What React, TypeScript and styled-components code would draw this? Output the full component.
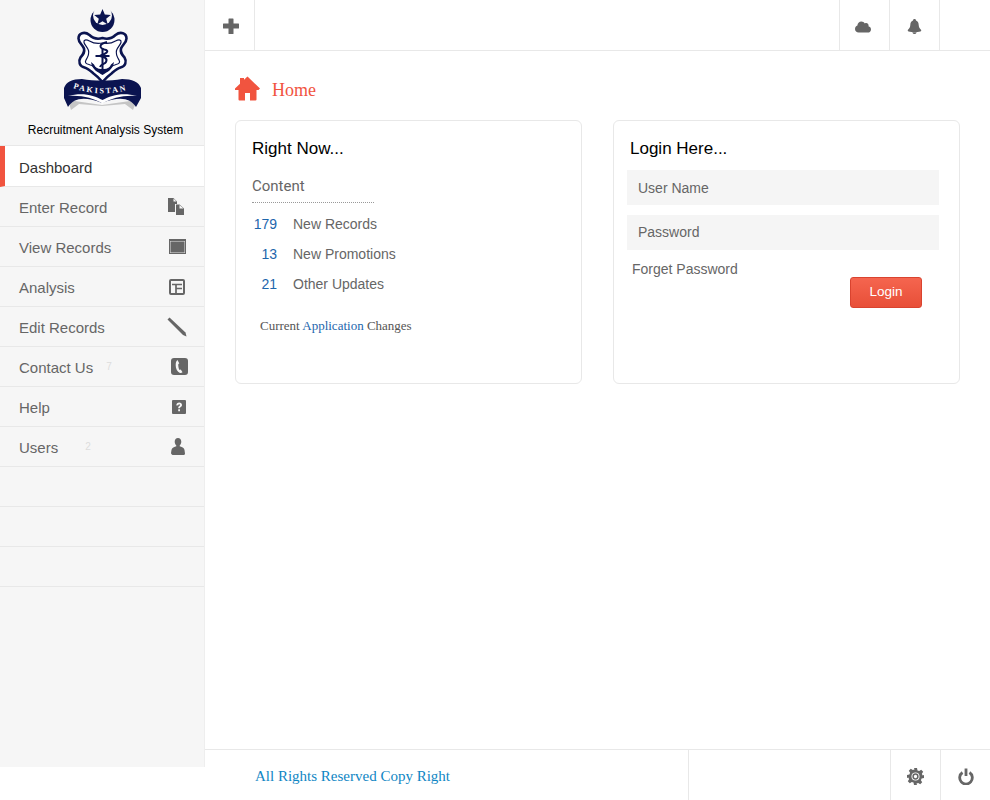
import React from 'react';
import styled, { createGlobalStyle } from 'styled-components';
import { FaCloud } from 'react-icons/fa';

const GlobalStyle = createGlobalStyle`
  html, body {
    margin: 0;
    padding: 0;
    background: #fff;
    font-family: "Liberation Sans", Arial, sans-serif;
  }
  * {
    box-sizing: border-box;
  }
`;

const Shell = styled.div`
  display: flex;
  align-items: flex-start;
  width: 990px;
  height: 800px;
  overflow: hidden;
`;

const Sidebar = styled.aside`
  flex: 0 0 205px;
  height: 767px;
  background: #f6f6f6;
  border-right: 1px solid #eeeeee;
`;

const Brand = styled.div`
  height: 146px;
  display: flex;
  flex-direction: column;
  align-items: center;
  border-bottom: 1px solid #e8e8e8;
  padding-top: 6px;
`;

const BrandTitle = styled.div`
  margin-top: 11px;
  padding-left: 7px;
  font-size: 12px;
  line-height: 14px;
  color: #000;
`;

const MenuRow = styled.div<{ $active?: boolean }>`
  height: ${p => (p.$active ? '41px' : '40px')};
  display: flex;
  align-items: center;
  padding: 2px 0 0 ${p => (p.$active ? '14px' : '19px')};
  border-bottom: 1px solid #e8e8e8;
  border-left: ${p => (p.$active ? '5px solid #f1543f' : 'none')};
  background: ${p => (p.$active ? '#fff' : 'transparent')};
  color: ${p => (p.$active ? '#333' : '#666')};
  font-size: 15px;
`;

const MenuLabel = styled.span`
  flex: 0 0 auto;
`;

const MenuBadge = styled.span<{ $gap: number }>`
  margin-left: ${p => p.$gap}px;
  align-self: flex-start;
  margin-top: 12px;
  font-size: 10px;
  line-height: 11px;
  color: #dddddd;
`;

const MenuIcon = styled.span<{ $right: number }>`
  margin-left: auto;
  width: 20px;
  height: 20px;
  margin-right: ${p => p.$right}px;
  margin-top: -2px;
  display: flex;
  align-items: center;
  justify-content: center;
  color: #666;
`;

const Main = styled.div`
  flex: 1;
  height: 800px;
  display: flex;
  flex-direction: column;
`;

const TopBar = styled.header`
  flex: 0 0 51px;
  display: flex;
  border-bottom: 1px solid #e8e8e8;
`;

const AddCell = styled.div`
  width: 50px;
  height: 50px;
  display: flex;
  align-items: center;
  justify-content: center;
  border-right: 1px solid #e8e8e8;
  padding: 1px 0 0 2px;
`;

const BarSpacer = styled.div`
  flex: 1;
`;

const BarCell = styled.div<{ $width?: number }>`
  width: ${p => p.$width ?? 50}px;
  display: flex;
  align-items: center;
  justify-content: center;
  border-left: 1px solid #e8e8e8;
  color: #666;
  padding-top: 3px;
`;

const CloudGlyph = styled(FaCloud)`
  margin-left: -4px;
`;

const Content = styled.main`
  flex: 1;
  padding: 25px 30px 0;
`;

const Breadcrumb = styled.div`
  height: 24px;
  display: flex;
  align-items: center;
  color: #f1543f;
  margin-bottom: 20px;
`;

const BreadcrumbText = styled.span`
  margin-left: 12px;
  margin-top: 4px;
  font-family: "Liberation Serif", "Times New Roman", serif;
  font-size: 18px;
`;

const Cards = styled.div`
  display: grid;
  grid-template-columns: 347px 347px;
  gap: 31px;
`;

const Card = styled.section`
  height: 264px;
  border: 1px solid #e8e8e8;
  border-radius: 6px;
  padding: 18px 16px 0;
`;

const CardTitle = styled.h2`
  margin: 0;
  font-size: 17px;
  font-weight: 400;
  line-height: 20px;
  color: #000;
`;

const SectionLabel = styled.div`
  width: 122px;
  margin-top: 17px;
  padding-bottom: 6px;
  border-bottom: 1px dotted #999;
  font-family: Roboto, sans-serif;
  font-size: 15px;
  line-height: 20px;
  color: #666;
`;

const StatList = styled.div`
  margin-top: 6px;
`;

const StatRow = styled.div`
  height: 30px;
  display: flex;
  align-items: center;
  font-size: 14px;
`;

const StatValue = styled.span`
  width: 25px;
  text-align: right;
  color: #1d66ac;
`;

const StatLabel = styled.span`
  margin-left: 16px;
  color: #666;
`;

const ChangesLine = styled.p`
  margin: 17px 0 0 8px;
  font-family: "Liberation Serif", "Times New Roman", serif;
  font-size: 13px;
  line-height: 20px;
  color: #555;
`;

const ChangesLink = styled.span`
  color: #1d66ac;
`;

const LoginInput = styled.input`
  display: block;
  width: 312px;
  height: 35px;
  margin: 0 0 10px -3px;
  padding: 0 11px;
  border: 0;
  outline: 0;
  background: #f5f5f5;
  font-family: "Liberation Sans", Arial, sans-serif;
  font-size: 14px;
  color: #666;

  &::placeholder {
    color: #666;
    opacity: 1;
  }

  &:first-of-type {
    margin-top: 11px;
  }

  &[type='password'] {
    padding-bottom: 2px;
  }
`;

const LoginActions = styled.div`
  width: 290px;
  margin: -1px 0 0 2px;
  display: flex;
  justify-content: space-between;
  align-items: flex-start;
`;

const ForgetLink = styled.span`
  font-size: 14px;
  line-height: 20px;
  color: #666;
`;

const LoginButton = styled.button`
  width: 72px;
  height: 31px;
  margin-top: 18px;
  padding: 0 0 2px;
  border: 1px solid #d9432f;
  border-radius: 3px;
  background: linear-gradient(#f5654f, #e84f38);
  font-family: "Liberation Sans", Arial, sans-serif;
  font-size: 13.5px;
  color: #fff;
`;

const Footer = styled.footer`
  flex: 0 0 51px;
  display: flex;
  border-top: 1px solid #e8e8e8;
`;

const FooterNote = styled.div`
  width: 484px;
  padding: 2px 0 0 50px;
  display: flex;
  align-items: center;
  border-right: 1px solid #e8e8e8;
  font-family: "Liberation Serif", "Times New Roman", serif;
  font-size: 15px;
  color: #0f86c4;
`;

const HomeIcon = () => (
  <svg width="25" height="25" viewBox="0 0 25 25" fill="#f1543f">
    <path d="M12.500 0.500L25 12.500l-1.500 1.500H0l-.0-1.500L5 7.700V2h4v1.800z" />
    <path d="M3.500 13.500h18V23.500a1 1 0 0 1-1 1H15v-7.500h-5v7.500H4.500a1 1 0 0 1-1-1z" />
  </svg>
);

const PlusIcon = () => (
  <svg width="16" height="16" viewBox="0 0 16 16" fill="#666">
    <path d="M6 0.500h4a.6.6 0 0 1 .5.500V5.500H15.500a.5.5 0 0 1 .5.500v4a.5.5 0 0 1-.5.500H10.500V15.500a.5.5 0 0 1-.5.500H6a.5.5 0 0 1-.5-.5V10.500H.5A.5.5 0 0 1 0 10V6a.5.5 0 0 1 .5-.5H5.500V1a.5.5 0 0 1 .5-.5z" />
  </svg>
);

const BellIcon = () => (
  <svg width="15" height="15" viewBox="0 0 15 15" fill="#666">
    <path d="M7.500 0c1 0 1.500.6 1.500 1.500 2 .8 2.600 2.500 2.700 4.500.1 2.500 1 3.500 2.300 4.800.5.600.3 1.400-.5 1.600-3.700.9-8.300.9-12 0-.8-.2-1-1-.5-1.600C2.300 9.500 3.200 8.500 3.300 6c.1-2 .7-3.700 2.700-4.500C6 .6 6.500 0 7.500 0z" />
    <path d="M5.300 13.200c1.400.2 3 .2 4.400 0-.3 1-1.100 1.800-2.200 1.800s-1.900-.8-2.200-1.800z" />
  </svg>
);

const GearIcon = () => (
  <svg width="17" height="17" viewBox="0 0 17 17">
    <path
      fill="#666"
      d="M7 0h3l.5 2.400 1.700.7 2-1.300 2 2-1.300 2 .7 1.700L17 7v3l-2.400.5-.7 1.700 1.300 2-2 2-2-1.300-1.700.7L10 17H7l-.5-2.400-1.700-.7-2 1.300-2-2 1.300-2-.7-1.700L0 10V7l2.400-.5.7-1.700-1.300-2 2-2 2 1.300 1.700-.7z"
    />
    <circle cx="8.500" cy="8.500" r="4" fill="#fff" />
    <circle cx="8.500" cy="8.500" r="2.400" fill="none" stroke="#666" strokeWidth="1.500" />
  </svg>
);

const PowerIcon = () => (
  <svg width="16" height="17" viewBox="0 0 16 17" fill="none" stroke="#666" strokeWidth="2.800">
    <path d="M4.500 4.500a6.300 6.300 0 1 0 7 0" />
    <path d="M8 0.500v7.500" />
  </svg>
);

const FilesIcon = () => (
  <svg width="16" height="17" viewBox="0 0 16 17" fill="#666">
    <path d="M0 0h5.500L9 3.500V6H7v8H0z" />
    <path d="M5.500 0.500V3.500H8.500z" fill="#f6f6f6" />
    <path d="M8 6.500h3.500l4.500 4V17H8z" />
    <path d="M11.500 7v3.500h4z" fill="#f6f6f6" />
  </svg>
);

const WindowIcon = () => (
  <svg width="17" height="15" viewBox="0 0 17 15">
    <rect width="17" height="15" fill="#666" />
    <rect x="1" y="2" width="15" height="12" fill="#e2e2e2" />
    <rect x="1.500" y="2.500" width="14" height="11" fill="#666" />
  </svg>
);

const LayoutIcon = () => (
  <svg width="16" height="16" viewBox="0 0 16 16" fill="none" stroke="#666" strokeWidth="2">
    <rect x="1" y="1" width="14" height="14" rx="1" />
    <path d="M3 5.500h10M7 5.500V14M7 9.500h6" strokeWidth="1.700" />
  </svg>
);

const PencilIcon = () => (
  <svg width="20" height="20" viewBox="0 0 20 20">
    <path d="M0.500 2.500L2.500 0.500 18.500 15.500 19.500 19.500 16 18z" fill="#666" />
  </svg>
);

const PhoneIcon = () => (
  <svg width="17" height="17" viewBox="0 0 17 17">
    <rect width="17" height="17" rx="3" fill="#666" />
    <path
      d="M6.500 2C5 3 4.700 5 4.700 7.500c0 3.200 1.500 6 4.300 7.500.9.300 1.800 0 2.500-.7l-1.700-2.800-1.300.6C7.500 10.300 7.100 8 7.300 6l1-.6z"
      fill="#f6f6f6"
    />
  </svg>
);

const HelpIcon = () => (
  <svg width="14" height="14" viewBox="0 0 14 14">
    <rect width="14" height="14" rx="1" fill="#666" />
    <path
      d="M4.300 5.400C4.300 3.700 5.500 2.500 7.200 2.500c1.700 0 2.800 1 2.800 2.400 0 1.100-.6 1.700-1.300 2.200-.5.400-.7.600-.7 1.200H6.200c0-1.200.3-1.700 1-2.200.5-.4.800-.7.800-1.100 0-.5-.3-.8-.8-.8-.6 0-.9.400-.9 1.100zM6.200 9.300H8v1.900H6.200z"
      fill="#f6f6f6"
    />
  </svg>
);

const PersonIcon = () => (
  <svg width="14" height="17" viewBox="0 0 14 17" fill="#666">
    <path d="M7 0c2 0 3.300 1.500 3.300 3.800 0 1.500-.7 2.900-1.600 3.600v.9c.8.300 1.800.7 3 1.300 1 .5 1.500 1.300 1.800 2.500l.5 3.400c0 .8-.5 1.500-1.500 1.500H1.500C.5 16.500 0 15.800 0 15l.5-2.900c.3-1.200.8-2 1.800-2.500 1.200-.6 2.200-1 3-1.300v-.9C4.400 6.700 3.700 5.300 3.700 3.800 3.700 1.500 5 0 7 0z" />
  </svg>
);

const CrestLogo = () => (
  <svg width="88" height="106" viewBox="56 6 88 106">
    <path d="M66 100l3 10 8-6 23 2 23-2 8 6 4-10-35 5z" fill="#9c9c9c" opacity="0.55" />
    <circle cx="100.500" cy="20" r="12" fill="#0b1450" />
    <circle cx="100.500" cy="15.500" r="9.500" fill="#f6f6f6" />
    <path
      d="M100.500 9l2.300 5.500 6 .4-4.600 3.800 1.500 5.800-5.200-3.200-5.200 3.200 1.500-5.800-4.600-3.800 6-.4z"
      fill="#0b1450"
    />
    <g fill="none" stroke="#0b1450">
      <path
        strokeWidth="2.600"
        fill="#fff"
        d="M100.500 38c-5 1.500-9 1-13-3-5-4-11-2-11 3.500 0 4 4 6 5.500 10 1 4-1 6-3.500 9-2.500 4-1 9 4 10 3.500 1 6 3.500 9 6 3.500 2.500 6 5 9 8.500 3-3.500 5.500-6 9-8.500 3-2.500 5.500-5 9-6 5-1 6.500-6 4-10-2.500-3-4.500-5-3.500-9 1.500-4 5.500-6 5.500-10 0-5.500-6-7.500-11-3.500-4 4-8 4.500-13 3z"
      />
      <path
        strokeWidth="1.200"
        d="M100.500 43c-5 1-9 .5-13-2-4-2-6-1-5.500 1.500 1 3 3.500 4.500 4.500 8 1 4-1 7-2.500 9.500-1.500 2.500 0 4 3 4.500 4 1 6.500 3.500 9.500 5.500 1.500 1 3 2.500 4 3.500 1-1 2.500-2.500 4-3.500 3-2 5.500-4.500 9.500-5.500 3-.5 4.500-2 3-4.500-1.500-2.500-3.500-5.500-2.500-9.500 1-3.500 3.500-5 4.500-8 .5-2.500-1.500-3.500-5.500-1.500-4 2.500-8 3-13 2z"
      />
      <path strokeWidth="2" d="M105 42c-8 2-9 6-1 8 4 2-2 4-6 6 4 1 8 2 6 6-1 2-5 2-6 5" />
    </g>
    <path d="M99.500 48h2v24h-2zM93.500 55h14v2h-14z" fill="#0b1450" />
    <path d="M89 62c1 8 7 10 11.500 13 4.500-3 10.500-5 11.500-13l-3 2.500c-1 3-4 4.500-7 4.500h-3c-3 0-6-1.500-7-4.500z" fill="#0b1450" />
    <path
      d="M62 88c2-6 8-9 18-9 12 2 28 2 40 0 10 0 17 3 19 9v10l-5 9c-6-9-16-11-34-4-18-7-28-5-34 4l-4-9z"
      fill="#0b1450"
    />
    <path d="M66 96c14-4 26-1 34.500 4 8.500-5 20.500-8 34.500-4-14-1-25 2-34.500 7.500C91 98 80 95 66 96z" fill="#fff" />
    <path id="crest-arc" d="M71 88c18 7 42 7 60 0" fill="none" />
    <text fontFamily="'Liberation Serif', serif" fontSize="8" fontWeight="700" fill="#fff" letterSpacing="1.900">
      <textPath href="#crest-arc">PAKISTAN</textPath>
    </text>
  </svg>
);

const menuItems = [
  { label: 'Dashboard', active: true },
  { label: 'Enter Record', icon: <FilesIcon />, right: 18 },
  { label: 'View Records', icon: <WindowIcon />, right: 17 },
  { label: 'Analysis', icon: <LayoutIcon />, right: 17 },
  { label: 'Edit Records', icon: <PencilIcon />, right: 17 },
  { label: 'Contact Us', badge: '7', gap: 13, icon: <PhoneIcon />, right: 15 },
  { label: 'Help', icon: <HelpIcon />, right: 15 },
  { label: 'Users', badge: '2', gap: 27, icon: <PersonIcon />, right: 16 },
  { label: '' },
  { label: '' },
  { label: '' },
];

const stats = [
  { value: 179, label: 'New Records' },
  { value: 13, label: 'New Promotions' },
  { value: 21, label: 'Other Updates' },
];

const App: React.FC = () => {
  return (
    <Shell>
      <GlobalStyle />
      <Sidebar>
        <Brand>
          <CrestLogo />
          <BrandTitle>Recruitment Analysis System</BrandTitle>
        </Brand>
        {menuItems.map((item, i) => (
          <MenuRow key={i} $active={item.active}>
            <MenuLabel>{item.label}</MenuLabel>
            {item.badge && <MenuBadge $gap={item.gap ?? 0}>{item.badge}</MenuBadge>}
            {item.icon && <MenuIcon $right={item.right ?? 17}>{item.icon}</MenuIcon>}
          </MenuRow>
        ))}
      </Sidebar>
      <Main>
        <TopBar>
          <AddCell>
            <PlusIcon />
          </AddCell>
          <BarSpacer />
          <BarCell>
            <CloudGlyph size={16} />
          </BarCell>
          <BarCell>
            <BellIcon />
          </BarCell>
          <BarCell $width={51} />
        </TopBar>
        <Content>
          <Breadcrumb>
            <HomeIcon />
            <BreadcrumbText>Home</BreadcrumbText>
          </Breadcrumb>
          <Cards>
            <Card>
              <CardTitle>Right Now...</CardTitle>
              <SectionLabel>Content</SectionLabel>
              <StatList>
                {stats.map(stat => (
                  <StatRow key={stat.label}>
                    <StatValue>{stat.value}</StatValue>
                    <StatLabel>{stat.label}</StatLabel>
                  </StatRow>
                ))}
              </StatList>
              <ChangesLine>
                Current <ChangesLink>Application</ChangesLink> Changes
              </ChangesLine>
            </Card>
            <Card>
              <CardTitle>Login Here...</CardTitle>
              <LoginInput placeholder="User Name" />
              <LoginInput placeholder="Password" type="password" />
              <LoginActions>
                <ForgetLink>Forget Password</ForgetLink>
                <LoginButton>Login</LoginButton>
              </LoginActions>
            </Card>
          </Cards>
        </Content>
        <Footer>
          <FooterNote>All Rights Reserved Copy Right</FooterNote>
          <BarSpacer />
          <BarCell>
            <GearIcon />
          </BarCell>
          <BarCell>
            <PowerIcon />
          </BarCell>
        </Footer>
      </Main>
    </Shell>
  );
};

export default App;
